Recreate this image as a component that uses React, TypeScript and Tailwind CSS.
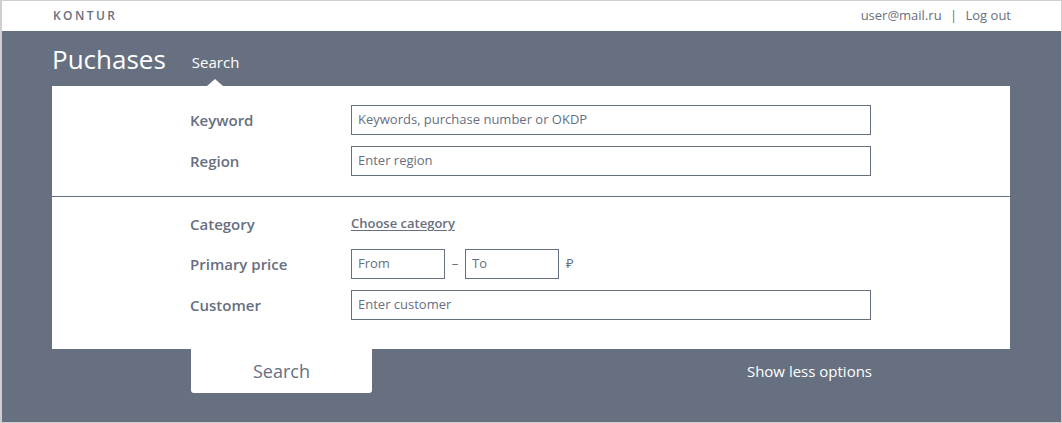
import React from 'react';

const font = { fontFamily: '"Open Sans", "Noto Sans", sans-serif' };

function Label({ children }: { children: React.ReactNode }) {
  return <div className="w-[161px] text-[15px] font-semibold text-[#676f80]">{children}</div>;
}

function Input({ placeholder, className = 'w-[520px]' }: { placeholder: string; className?: string }) {
  return (
    <div className={`${className} h-[30px] border border-[#667080] flex items-center px-[6px] text-[13px] text-[#676f80]`}>
      {placeholder}
    </div>
  );
}

function Row({ label, children }: { label: string; children: React.ReactNode }) {
  return (
    <div className="flex items-center h-[30px]">
      <Label>{label}</Label>
      {children}
    </div>
  );
}

export default function App() {
  return (
    <div style={font} className="w-[1062px] h-[423px] border border-[#cfcfcf] border-l-2 bg-white flex flex-col overflow-hidden">
      {/* top bar */}
      <div className="h-[30px] flex items-center justify-between pl-[51px] pr-[50px] shrink-0">
        <span className="text-[12px] font-semibold tracking-[0.2em] text-[#676f80]">KONTUR</span>
        <span className="text-[13px] text-[#676f80]">
          user@mail.ru <span className="mx-[5px]">|</span> Log out
        </span>
      </div>

      <div className="flex-1 bg-[#667080] px-[50px] flex flex-col">
        {/* header */}
        <div className="relative h-[55px] flex items-end gap-[26px] pb-[14px]">
          <span className="text-[26px] leading-none text-white">Puchases</span>
          <span className="text-[15px] leading-none text-white pb-[2px]">Search</span>
          <span className="absolute left-[155px] bottom-0 w-0 h-0 border-l-[8px] border-r-[8px] border-b-[7px] border-l-transparent border-r-transparent border-b-white" />
        </div>

        {/* card */}
        <div className="bg-white w-[958px]">
          <div className="pl-[138px] pt-[19px] pb-[20px] flex flex-col gap-[11px]">
            <Row label="Keyword">
              <Input placeholder="Keywords, purchase number or OKDP" />
            </Row>
            <Row label="Region">
              <Input placeholder="Enter region" />
            </Row>
          </div>
          <div className="h-px bg-[#667080]" />
          <div className="pl-[138px] pt-[12px] pb-[29px] flex flex-col gap-[11px]">
            <div className="flex items-center h-[30px] -mb-[1px]">
              <Label>Category</Label>
              <span className="text-[13px] font-semibold text-[#676f80] underline underline-offset-2">Choose category</span>
            </div>
            <Row label="Primary price">
              <Input placeholder="From" className="w-[94px]" />
              <span className="w-[20px] text-center text-[13px] text-[#676f80]">–</span>
              <Input placeholder="To" className="w-[94px]" />
              <span className="ml-[7px] text-[13px] text-[#676f80]">₽</span>
            </Row>
            <Row label="Customer">
              <Input placeholder="Enter customer" />
            </Row>
          </div>
        </div>

        {/* actions */}
        <div className="flex items-start pl-[139px] w-[958px]">
          <div className="w-[181px] h-[44px] bg-white rounded-b-[3px] flex items-center justify-center text-[18px] font-medium text-[#676f80]">
            Search
          </div>
          <div className="w-[500px] h-[44px] flex items-center justify-end text-[15px] text-white">
            Show less options
          </div>
        </div>
      </div>
    </div>
  );
}
